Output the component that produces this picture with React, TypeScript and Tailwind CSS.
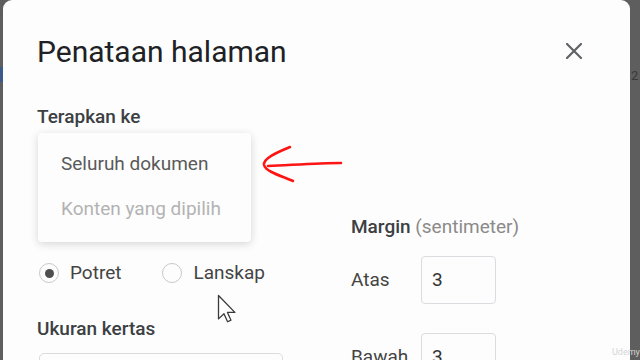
import React from "react";

function Radio({ checked }: { checked?: boolean }) {
  return (
    <span className="w-[20px] h-[20px] rounded-full border-[1.5px] border-[#c9c9c9] flex items-center justify-center">
      {checked ? <span className="w-[9px] h-[9px] rounded-full bg-[#4f4f4f]" /> : null}
    </span>
  );
}

export default function App() {
  return (
    <div
      className="relative w-[640px] h-[360px] overflow-hidden flex bg-[#5e5e5e]"
      style={{ fontFamily: "Roboto, 'Liberation Sans', sans-serif" }}
    >
      {/* left strip */}
      <div className="w-[3px] shrink-0 flex flex-col">
        <div className="h-[67px]" />
        <div className="h-[15px] bg-[#3b5a8a]" />
      </div>

      {/* dialog */}
      <div className="relative w-[627px] shrink-0 bg-[#fdfdfd] rounded-t-[9px] pl-[34px]">
        <div className="flex items-start justify-between pt-[34px] pr-[48px]">
          <h1 className="text-[30px] leading-[36px] text-[#202124] font-normal">Penataan halaman</h1>
          <svg width="16" height="16" viewBox="0 0 16 16" className="mt-[9px]">
            <path d="M1 1 L15 15 M15 1 L1 15" stroke="#5f6368" strokeWidth="2.2" strokeLinecap="square" />
          </svg>
        </div>

        <div className="mt-[35px] text-[19px] leading-[24px] font-medium text-[#3c4043]">Terapkan ke</div>
        {/* space of the select that the open menu covers */}
        <div className="mt-[8px] w-[200px] h-[48px]" />

        <div className="mt-[30px] flex">
          <div className="w-[314px] shrink-0 flex flex-col">
            <div className="h-[24px]" />
            <div className="mt-[22px] h-[24px] flex items-center text-[19px] leading-[24px] text-[#444]">
              <span className="ml-[2px]"><Radio checked /></span>
              <span className="ml-[11px]">Potret</span>
              <span className="ml-[41px]"><Radio /></span>
              <span className="ml-[11px]">Lanskap</span>
            </div>
            <div className="mt-[32px] text-[19px] leading-[24px] font-medium text-[#3c4043]">Ukuran kertas</div>
            <div className="mt-[12px] ml-[2px] w-[244px] h-[48px] rounded-[5px] border border-[#dadce0]" />
          </div>

          <div className="flex flex-col">
            <div className="text-[19px] leading-[24px] text-[#3c4043]">
              <span className="font-medium">Margin</span>
              <span className="text-[#8a8a8a]"> (sentimeter)</span>
            </div>
            <div className="mt-[17px] flex items-center">
              <span className="w-[70px] text-[19px] leading-[24px] text-[#444]">Atas</span>
              <div className="w-[75px] h-[48px] rounded-[4px] border border-[#dadce0] flex items-center pl-[10px] text-[19px] text-[#333]">3</div>
            </div>
            <div className="mt-[29px] flex items-center">
              <span className="w-[70px] text-[19px] leading-[24px] text-[#444]">Bawah</span>
              <div className="w-[75px] h-[48px] rounded-[4px] border border-[#dadce0] flex items-center pl-[10px] text-[19px] text-[#333]">3</div>
            </div>
          </div>
        </div>

        {/* open dropdown menu */}
        <div className="absolute left-[35px] top-[133px] w-[213px] pt-[8px] pb-[11px] bg-[#fdfdfd] rounded-[4px] shadow-[0_2px_8px_rgba(0,0,0,0.16)] text-[19px] leading-[45px]">
          <div className="pl-[23px] text-[#5a5a5a]">Seluruh dokumen</div>
          <div className="pl-[23px] text-[#b3b3b3]">Konten yang dipilih</div>
        </div>
      </div>

      {/* right strip */}
      <div className="flex-1 relative">
        <span className="absolute left-[1px] top-[66px] text-[13px] text-[#3a3a3a]">2</span>
      </div>

      {/* watermark */}
      <span className="absolute left-[612px] top-[346px] text-[9px] text-[#d6d6d6]">Udemy</span>

      {/* annotations: red arrow + mouse cursor */}
      <svg className="absolute left-0 top-0 pointer-events-none" width="640" height="360" viewBox="0 0 640 360">
        <path
          d="M290 147 C 278 152, 263 158, 264 165 C 266 172, 282 176, 293 181"
          fill="none"
          stroke="#ff1414"
          strokeWidth="2.6"
          strokeLinecap="round"
        />
        <path d="M268 166 C 292 165, 318 163, 341 163" fill="none" stroke="#ff1414" strokeWidth="2.6" strokeLinecap="round" />
        <g transform="translate(218.5 295.5) scale(1.3)">
          <path
            d="M0 0 L0 18 L4.2 14 L7 20.2 L9.6 19 L6.9 13 L12.6 13 Z"
            fill="#ffffff"
            stroke="#3a3a3a"
            strokeWidth="1"
            strokeLinejoin="round"
          />
        </g>
      </svg>
    </div>
  );
}
